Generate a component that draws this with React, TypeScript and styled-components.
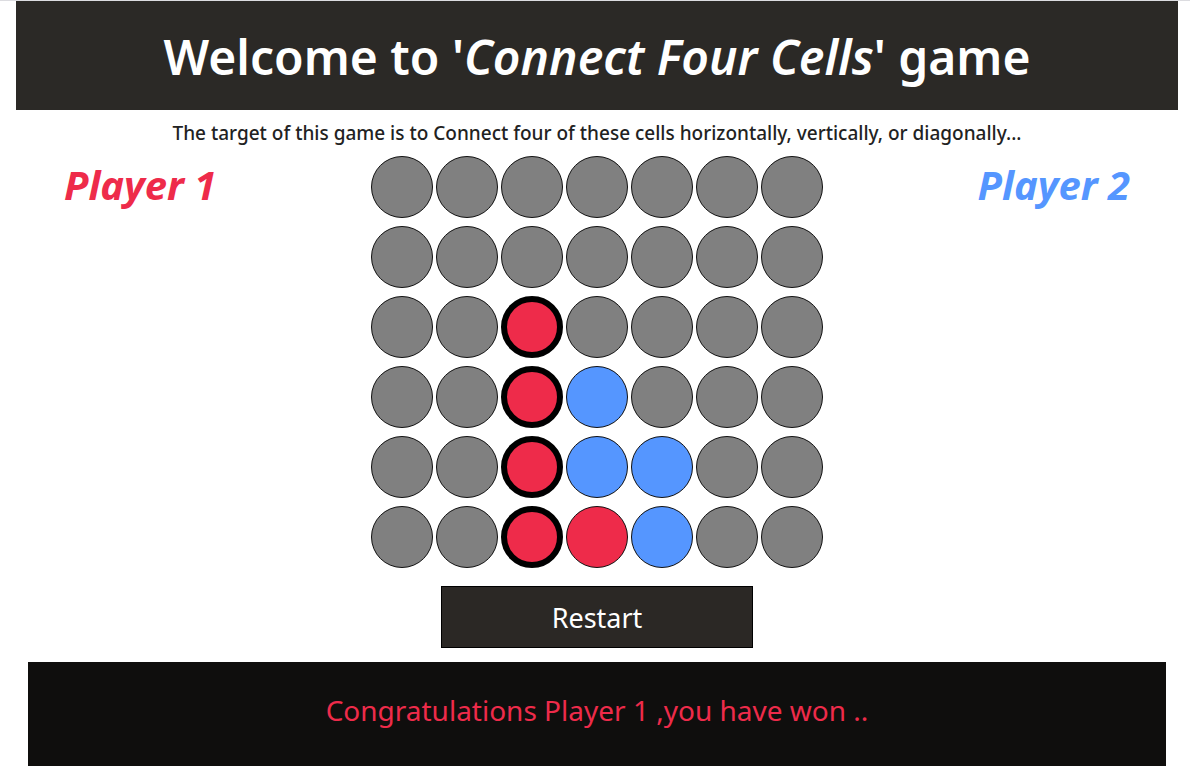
import React from "react";
import styled, { createGlobalStyle } from "styled-components";

const Global = createGlobalStyle`
  html, body { margin: 0; padding: 0; background: #fff; }
  body { font-family: "Noto Sans", "Open Sans", sans-serif; }
`;

const Page = styled.div`
  border-top: 1px solid #dcdce0;
  padding: 0 12px 0 16px;
  display: flex;
  flex-direction: column;
  align-items: stretch;
`;

const Header = styled.header`
  background: #2b2926;
  height: 109px;
  display: flex;
  align-items: center;
  justify-content: center;
`;

const Title = styled.h1`
  margin: 0;
  padding-top: 2px;
  color: #fff;
  font-size: 48px;
  font-weight: 600;
  letter-spacing: 0px;
  em { font-style: italic; }
`;

const Subtitle = styled.p`
  margin: 10px 0 0;
  text-align: center;
  font-size: 19px;
  font-weight: 500;
  color: #222;
  line-height: 26px;
`;

const Arena = styled.div`
  display: grid;
  grid-template-columns: 1fr auto 1fr;
  margin-top: 10px;
`;

const PlayerLabel = styled.div<{ $color: string; $side: "left" | "right" }>`
  color: ${(p) => p.$color};
  font-size: 40px;
  font-weight: 700;
  font-style: italic;
  line-height: 44px;
  margin-top: 7px;
  justify-self: ${(p) => (p.$side === "left" ? "start" : "end")};
  ${(p) => (p.$side === "left" ? "padding-left: 48px;" : "padding-right: 48px;")}
`;

const Board = styled.div`
  display: grid;
  grid-template-columns: repeat(7, 62px);
  column-gap: 3px;
  row-gap: 8px;
`;

const Cell = styled.div<{ $fill: string; $win?: boolean }>`
  width: 62px;
  height: 62px;
  box-sizing: border-box;
  border-radius: 50%;
  background: ${(p) => p.$fill};
  border: ${(p) => (p.$win ? "6px solid #000" : "1px solid #111")};
`;

const Restart = styled.button`
  align-self: center;
  margin-top: 18px;
  width: 312px;
  height: 62px;
  background: #2b2825;
  border: 1px solid #000;
  color: #fff;
  font-family: "Noto Sans", "Open Sans", sans-serif;
  font-size: 27px;
  padding-top: 2px;
  cursor: pointer;
`;

const Footer = styled.footer`
  margin: 14px 12px 0;
  background: #0f0e0d;
  height: 104px;
  display: flex;
  justify-content: center;
  padding-top: 28px;
  box-sizing: border-box;
  color: #ee2b4a;
  font-size: 28px;
  line-height: 40px;
`;

const RED = "#ee2b4a";
const BLUE = "#5596ff";
const GRAY = "#808080";

type C = "g" | "r" | "b" | "R";
const grid: C[][] = [
  ["g", "g", "g", "g", "g", "g", "g"],
  ["g", "g", "g", "g", "g", "g", "g"],
  ["g", "g", "R", "g", "g", "g", "g"],
  ["g", "g", "R", "b", "g", "g", "g"],
  ["g", "g", "R", "b", "b", "g", "g"],
  ["g", "g", "R", "r", "b", "g", "g"],
];

const fillOf = (c: C) => (c === "g" ? GRAY : c === "b" ? BLUE : RED);

export default function App() {
  return (
    <>
      <Global />
      <Page>
        <Header>
          <Title>
            Welcome to '<em>Connect Four Cells</em>' game
          </Title>
        </Header>
        <Subtitle>
          The target of this game is to Connect four of these cells horizontally, vertically, or diagonally...
        </Subtitle>
        <Arena>
          <PlayerLabel $color={RED} $side="left">Player 1</PlayerLabel>
          <Board>
            {grid.flatMap((row, r) =>
              row.map((c, i) => <Cell key={`${r}-${i}`} $fill={fillOf(c)} $win={c === "R"} />)
            )}
          </Board>
          <PlayerLabel $color={BLUE} $side="right">Player 2</PlayerLabel>
        </Arena>
        <Restart>Restart</Restart>
        <Footer>Congratulations Player 1 ,you have won ..</Footer>
      </Page>
    </>
  );
}
